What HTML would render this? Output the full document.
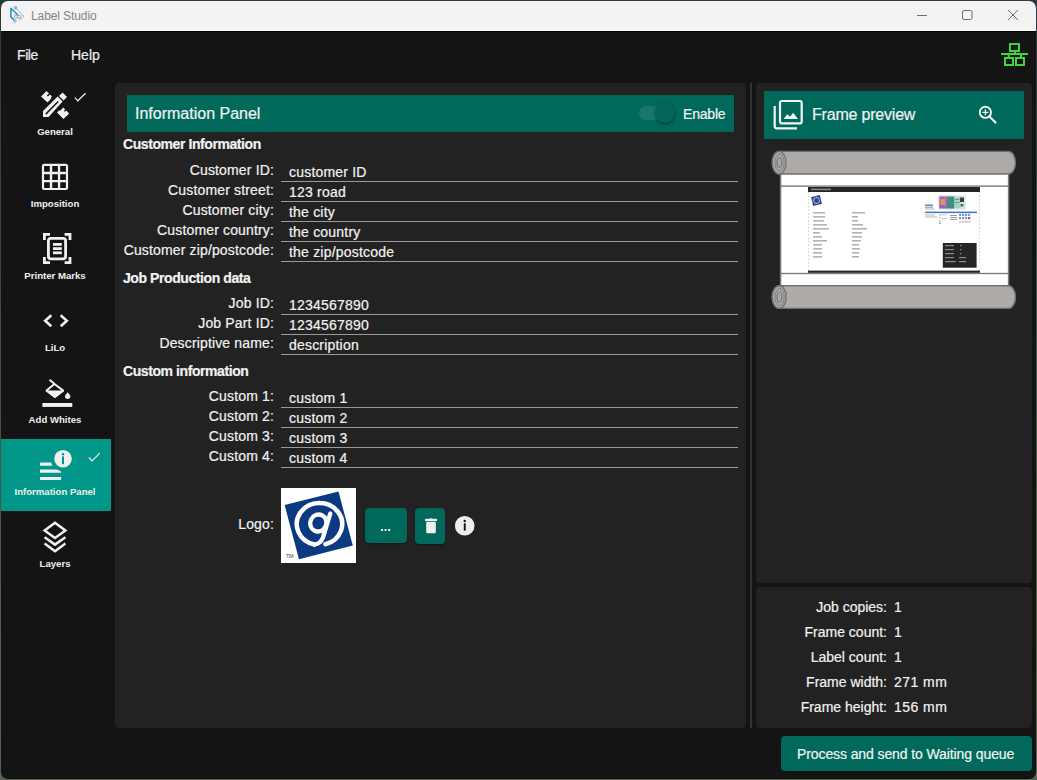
<!DOCTYPE html>
<html><head><meta charset="utf-8">
<style>
*{margin:0;padding:0;box-sizing:border-box}
html,body{width:1037px;height:780px;overflow:hidden;background:linear-gradient(#2c3a3e,#4a5448 60%,#5a6452);font-family:"Liberation Sans",sans-serif}
.a{position:absolute}
#win{position:absolute;left:1px;top:1px;width:1035px;height:778px;background:#141414;border-radius:7px;overflow:hidden;border-bottom:1px solid #0e0e0e}
#title{position:absolute;left:0;top:0;width:1035px;height:30px;background:#f3f3f3;border-bottom:1px solid #fff}
.t{position:absolute;white-space:nowrap;color:#f2f2f2;font-size:14px;line-height:16px;-webkit-text-stroke:0.2px currentColor}
.lbl{text-align:right;width:200px;left:74px;letter-spacing:0.15px}
.val{left:289px;letter-spacing:0.2px}
.ul{position:absolute;left:281px;width:457px;height:1px;background:#9a9a9a}
.hdr{font-weight:bold;letter-spacing:-0.42px;left:123px}
.side{position:absolute;font-weight:bold;font-size:9.6px;line-height:12px;color:#f0f0f0;white-space:nowrap;text-align:center;width:110px;left:0}
.panel{position:absolute;background:#222222;border-radius:4px}
.btn{position:absolute;background:#00695c;border-radius:4px}
</style></head><body>
<div id="win">
  <div id="title">
    <div class="t" style="left:30px;top:8px;font-size:12px;line-height:14px;color:#858585;-webkit-text-stroke:0;letter-spacing:-0.1px">Label Studio</div>
  </div>
  <div class="a" style="left:0;top:30px;width:1035px;height:1px;background:#000"></div>
</div>

<!-- menu -->
<div class="t" style="left:17px;top:47px;font-size:14px;color:#eee;letter-spacing:-0.4px">File</div>
<div class="t" style="left:71px;top:47px;font-size:14px;color:#eee">Help</div>

<!-- sidebar selected -->
<div class="a" style="left:1px;top:439px;width:110px;height:72px;background:#009688"></div>

<!-- sidebar labels -->
<div class="side" style="top:126px">General</div>
<div class="side" style="top:198px">Imposition</div>
<div class="side" style="top:270px">Printer Marks</div>
<div class="side" style="top:342px">LiLo</div>
<div class="side" style="top:414px">Add Whites</div>
<div class="side" style="top:486px">Information Panel</div>
<div class="side" style="top:558px">Layers</div>

<!-- panels -->
<div class="panel" style="left:115px;top:83px;width:631px;height:645px"></div>
<div class="a" style="left:750px;top:83px;width:2px;height:645px;background:#333"></div>
<div class="panel" style="left:756px;top:83px;width:276px;height:500px"></div>
<div class="panel" style="left:756px;top:587px;width:276px;height:141px"></div>

<!-- info header -->
<div class="a" style="left:127px;top:95px;width:607px;height:37px;background:#00695c"></div>
<div class="t" style="left:135px;top:105px;font-size:16px;line-height:18px">Information Panel</div>
<div class="a" style="left:639px;top:106px;width:29px;height:14px;border-radius:7px;background:#1e7a6e;opacity:.8"></div>
<div class="a" style="left:655px;top:103px;width:20px;height:20px;border-radius:10px;background:#02665a;box-shadow:0 1px 3px rgba(0,0,0,.45)"></div>
<div class="t" style="left:683px;top:106px;letter-spacing:-0.2px">Enable</div>

<!-- form -->
<div class="t hdr" style="top:136px">Customer Information</div>
<div class="t lbl" style="top:162px">Customer ID:</div>
<div class="t lbl" style="top:182px">Customer street:</div>
<div class="t lbl" style="top:202px">Customer city:</div>
<div class="t lbl" style="top:222px">Customer country:</div>
<div class="t lbl" style="top:242px">Customer zip/postcode:</div>
<div class="t val" style="top:164px">customer ID</div>
<div class="t val" style="top:184px">123 road</div>
<div class="t val" style="top:204px">the city</div>
<div class="t val" style="top:224px">the country</div>
<div class="t val" style="top:244px">the zip/postcode</div>
<div class="ul" style="top:181px"></div>
<div class="ul" style="top:201px"></div>
<div class="ul" style="top:221px"></div>
<div class="ul" style="top:241px"></div>
<div class="ul" style="top:261px"></div>

<div class="t hdr" style="top:270px">Job Production data</div>
<div class="t lbl" style="top:295px">Job ID:</div>
<div class="t lbl" style="top:315px">Job Part ID:</div>
<div class="t lbl" style="top:335px">Descriptive name:</div>
<div class="t val" style="top:297px">1234567890</div>
<div class="t val" style="top:317px">1234567890</div>
<div class="t val" style="top:337px">description</div>
<div class="ul" style="top:314px"></div>
<div class="ul" style="top:334px"></div>
<div class="ul" style="top:354px"></div>

<div class="t hdr" style="top:363px">Custom information</div>
<div class="t lbl" style="top:388px">Custom 1:</div>
<div class="t lbl" style="top:408px">Custom 2:</div>
<div class="t lbl" style="top:428px">Custom 3:</div>
<div class="t lbl" style="top:448px">Custom 4:</div>
<div class="t val" style="top:390px">custom 1</div>
<div class="t val" style="top:410px">custom 2</div>
<div class="t val" style="top:430px">custom 3</div>
<div class="t val" style="top:450px">custom 4</div>
<div class="ul" style="top:407px"></div>
<div class="ul" style="top:427px"></div>
<div class="ul" style="top:447px"></div>
<div class="ul" style="top:467px"></div>

<div class="t lbl" style="top:516px">Logo:</div>
<div class="a" style="left:281px;top:488px;width:75px;height:75px;background:#fff"></div>
<div class="btn" style="left:365px;top:508px;width:42px;height:35px;box-shadow:0 1px 2px rgba(0,0,0,.4)"></div>
<div class="btn" style="left:415px;top:508px;width:30px;height:36px;box-shadow:0 1px 2px rgba(0,0,0,.4)"></div>

<!-- frame preview header -->
<div class="a" style="left:764px;top:91px;width:260px;height:48px;background:#00695c"></div>
<div class="t" style="left:812px;top:106px;font-size:16px;line-height:18px;letter-spacing:-0.2px">Frame preview</div>

<!-- stats -->
<div class="t" style="left:687px;width:200px;text-align:right;top:599px">Job copies:</div>
<div class="t" style="left:687px;width:200px;text-align:right;top:624px">Frame count:</div>
<div class="t" style="left:687px;width:200px;text-align:right;top:649px">Label count:</div>
<div class="t" style="left:687px;width:200px;text-align:right;top:674px">Frame width:</div>
<div class="t" style="left:687px;width:200px;text-align:right;top:699px">Frame height:</div>
<div class="t" style="left:894px;top:599px">1</div>
<div class="t" style="left:894px;top:624px">1</div>
<div class="t" style="left:894px;top:649px">1</div>
<div class="t" style="left:894px;top:674px;letter-spacing:0.45px">271 mm</div>
<div class="t" style="left:894px;top:699px;letter-spacing:0.45px">156 mm</div>

<!-- process button -->
<div class="btn" style="left:781px;top:736px;width:251px;height:35px"></div>
<div class="t" style="left:797px;top:746px;letter-spacing:-0.1px">Process and send to Waiting queue</div>



<!-- frame preview roll -->
<svg class="a" style="left:0;top:0" width="1037" height="780" viewBox="0 0 1037 780">
 <defs>
  <g id="roller">
   <path d="M779.2 0.4 H1008.5 A7 11.3 0 0 1 1008.5 23 H779.2 A7 11.3 0 0 1 779.2 0.4 Z" fill="#adaaa8" stroke="#6f6f6f" stroke-width="1.4"/>
   <ellipse cx="779.2" cy="11.7" rx="7" ry="11.3" fill="#a9a6a4" stroke="#6f6f6f" stroke-width="1.2"/>
   <ellipse cx="779.6" cy="11.7" rx="4.6" ry="8.6" fill="none" stroke="#7a7a7a" stroke-width="0.9"/>
   <ellipse cx="779.4" cy="11.7" rx="2.4" ry="5" fill="none" stroke="#6a6a6a" stroke-width="0.9"/>
  </g>
 </defs>
 <rect x="780.6" y="173" width="228" height="114" fill="#fff" stroke="#7a7a7a" stroke-width="1.5"/>
 <rect x="780.6" y="185.4" width="228" height="1.4" fill="#7d7d7d"/>
 <rect x="780.6" y="272.8" width="228" height="1.4" fill="#7d7d7d"/>
 <use href="#roller" transform="translate(0,151)"/>
 <use href="#roller" transform="translate(0,285.4)"/>
 <!-- label thumb -->
 <rect x="808" y="187" width="172" height="5" fill="#252525"/>
 <rect x="811" y="188.6" width="20" height="1.6" fill="#8a8a8a"/>
 <rect x="808" y="270.6" width="172" height="2.2" fill="#252525"/>
 <path d="M808.6 192 V270 M979.4 192 V270" stroke="#9bd49b" stroke-width="0.8" stroke-dasharray="1.5 2"/>
 <g transform="rotate(-14 816.5 200.5)"><rect x="812" y="196" width="9" height="9" fill="#2d4590"/><circle cx="816.5" cy="200.5" r="3" fill="none" stroke="#c0c8e0" stroke-width="0.9"/></g>
 <rect x="813" y="212" width="12" height="1.6" fill="#b4b4b4"/><rect x="852" y="212" width="13" height="1.6" fill="#b4b4b4"/><rect x="813" y="216" width="12" height="1.6" fill="#b4b4b4"/><rect x="852" y="216" width="6" height="1.6" fill="#b4b4b4"/><rect x="813" y="220" width="11" height="1.6" fill="#b4b4b4"/><rect x="852" y="220" width="6" height="1.6" fill="#b4b4b4"/><rect x="813" y="224" width="14" height="1.6" fill="#b4b4b4"/><rect x="852" y="224" width="11" height="1.6" fill="#b4b4b4"/><rect x="813" y="228" width="16" height="1.6" fill="#b4b4b4"/><rect x="852" y="228" width="15" height="1.6" fill="#b4b4b4"/><rect x="813" y="232" width="7" height="1.6" fill="#b4b4b4"/><rect x="852" y="232" width="10" height="1.6" fill="#b4b4b4"/><rect x="813" y="236" width="9" height="1.6" fill="#b4b4b4"/><rect x="852" y="236" width="10" height="1.6" fill="#b4b4b4"/><rect x="813" y="240" width="14" height="1.6" fill="#b4b4b4"/><rect x="852" y="240" width="9" height="1.6" fill="#b4b4b4"/><rect x="813" y="244" width="9" height="1.6" fill="#b4b4b4"/><rect x="852" y="244" width="7" height="1.6" fill="#b4b4b4"/><rect x="813" y="248" width="9" height="1.6" fill="#b4b4b4"/><rect x="852" y="248" width="8" height="1.6" fill="#b4b4b4"/><rect x="813" y="252" width="9" height="1.6" fill="#b4b4b4"/><rect x="852" y="252" width="7" height="1.6" fill="#b4b4b4"/><rect x="813" y="256" width="9" height="1.6" fill="#b4b4b4"/><rect x="852" y="256" width="7" height="1.6" fill="#b4b4b4"/>
 <rect x="938.5" y="195.5" width="27" height="14" fill="none" stroke="#d8d8d8" stroke-width="0.5"/>
 <rect x="939" y="196" width="26" height="13" fill="#cfe6df"/>
 <rect x="939.3" y="196.5" width="8" height="12" fill="#9c62c8"/>
 <rect x="940.5" y="199" width="5" height="6" fill="#d89a50"/>
 <rect x="944.5" y="197" width="2.5" height="4" fill="#e060a8"/>
 <rect x="947" y="196.5" width="7.5" height="12" fill="#3f8f7c"/>
 <rect x="954.5" y="197" width="6" height="11" fill="#a9d2c8"/>
 <rect x="955" y="199" width="4.5" height="1" fill="#708f88"/>
 <rect x="955" y="202" width="4.5" height="1" fill="#708f88"/>
 <rect x="960" y="197.5" width="4" height="4.5" fill="#3a3f3f"/>
 <rect x="960.5" y="204" width="3" height="2.5" fill="#4a7a70"/>
 <rect x="925" y="204.5" width="8" height="1.6" fill="#4a90d0"/>
 <rect x="925" y="206.8" width="8" height="0.9" fill="#8a8a8a"/>
 <rect x="925" y="208.5" width="9" height="0.9" fill="#aaaaaa"/>
 <rect x="925" y="211.6" width="52" height="1.5" fill="#3a78c8"/>
 <rect x="925" y="214.5" width="10" height="0.9" fill="#b0b0b0"/>
 <rect x="925" y="216.5" width="12" height="0.9" fill="#b0b0b0"/>
 <rect x="939" y="214" width="1.6" height="1.6" fill="#80d8e0"/>
 <rect x="939" y="217" width="1.6" height="1.6" fill="#e8d860"/>
 <rect x="939" y="220" width="1.6" height="1.6" fill="#d8c0e8"/>
 <rect x="939" y="222.5" width="1.6" height="1.2" fill="#8060b0"/>
 <rect x="941.5" y="214.5" width="5" height="0.9" fill="#b8b8b8"/>
 <rect x="941.5" y="218" width="6" height="0.9" fill="#b8b8b8"/>
 <rect x="950" y="215" width="7" height="0.9" fill="#909090"/>
 <rect x="950" y="217" width="7" height="0.9" fill="#909090"/>
 <rect x="950" y="219" width="7" height="0.9" fill="#909090"/>
 <g fill="#7a9ad8"><rect x="959" y="213.8" width="2.2" height="2.2"/><rect x="962" y="213.8" width="2.2" height="2.2"/><rect x="965" y="213.8" width="2.2" height="2.2"/><rect x="968" y="213.8" width="2.2" height="2.2"/><rect x="959" y="217" width="2.2" height="2.2"/><rect x="962" y="217" width="2.2" height="2.2"/><rect x="965" y="217" width="2.2" height="2.2"/></g>
 <rect x="968" y="217" width="2.2" height="2.2" fill="#d04050"/>
 <rect x="959" y="221.5" width="12" height="0.8" fill="#a0a0a0"/>
 <rect x="942.8" y="243" width="33.8" height="24.7" fill="#252525"/>
 <g fill="#8a8a8a"><rect x="945" y="245" width="9" height="1.2"/><rect x="945" y="249" width="9" height="1.2"/><rect x="945" y="253" width="9" height="1.2"/><rect x="945" y="257" width="9" height="1.2"/><rect x="945" y="261" width="11" height="1.2"/>
 <rect x="960" y="245" width="1.5" height="1.2"/><rect x="960" y="249" width="1.5" height="1.2"/><rect x="960" y="253" width="1.5" height="1.2"/><rect x="959" y="257" width="7" height="1.2"/><rect x="959" y="261" width="7" height="1.2"/></g>
</svg>

<!-- logo -->
<svg class="a" style="left:281px;top:488px" width="75" height="75" viewBox="281 488 75 75">
 <rect x="281" y="488" width="75" height="75" fill="#fff"/>
 <path d="M284.6 505 L338.5 491.6 L352.8 545.5 L299 559.3 Z" fill="#0b3a80"/>
 <path d="M314.4 544.5 A22.7 21 0 1 1 325.4 544.3" fill="none" stroke="#fff" stroke-width="4.5" stroke-linecap="round"/>
 <ellipse cx="318.3" cy="523" rx="8" ry="8.6" transform="rotate(25 318.3 523)" fill="none" stroke="#fff" stroke-width="4.3"/>
 <path d="M330.3 513.5 L323 537.5 Q320.5 544 314.4 544.5" fill="none" stroke="#fff" stroke-width="4.3" stroke-linecap="round"/>
 <text x="286" y="557.5" font-family="Liberation Sans" font-size="5.5" fill="#444" letter-spacing="-0.3">TM</text>
</svg>

<!-- icon overlay -->
<svg class="a" style="left:0;top:0" width="1037" height="780" viewBox="0 0 1037 780">
 <!-- app logo -->
 <g fill="none" stroke-linejoin="round">
  <path d="M17.8 15 L11 8.3 L10.8 16.8 L14 19.8" stroke="#2a93d5" stroke-width="1.6"/>
  <path d="M15.6 7.6 L23.6 16.4 L19 20.4" stroke="#5d93b3" stroke-width="1" stroke-dasharray="1.3 0.7"/>
  <circle cx="15.4" cy="7.6" r="1.1" stroke="#5a8fb0" stroke-width="0.9"/>
  <circle cx="14.9" cy="21" r="1.3" stroke="#6a9ab8" stroke-width="0.9"/>
  <circle cx="16" cy="16.5" r="1.5" stroke="#7ea3b8" stroke-width="0.9"/>
  <circle cx="19" cy="16.8" r="1.5" stroke="#7ea3b8" stroke-width="0.9"/>
 </g>
 <!-- window controls -->
 <g stroke="#6e6e6e" stroke-width="1" fill="none">
  <path d="M917 15.5 H927"/>
  <rect x="962.5" y="10.5" width="9.5" height="9" rx="1.5"/>
  <path d="M1008 10 L1018 20 M1018 10 L1008 20"/>
 </g>
 <!-- network icon -->
 <g fill="none" stroke="#3ad63a" stroke-width="2">
  <rect x="1010" y="44" width="9" height="7"/>
  <path d="M1015 51 V54 M1001 54 H1028 M1008.7 54 V58 M1021 54 V58"/>
  <rect x="1005" y="58" width="8" height="7"/>
  <rect x="1016" y="58" width="8" height="7"/>
 </g>
 <!-- sidebar icons -->
 <g fill="#f0f0f0">
  <!-- general -->
  <path d="M41 96.5 L46.5 90.9 L49 93.4 L46.8 95.6 L47.8 96.6 L50 94.4 L52 96.4 L50.8 97.6 L51.4 98.2 L47.6 102.4 Z"/>
  <path d="M59 95.9 L62.6 92.4 L67 96.9 L63.6 100.5 Z"/>
  <path d="M57 112.4 L59.1 110.3 L59.8 111 L60.5 110.3 L63.4 107.6 L65.2 109.4 L63.9 110.8 L64.8 111.7 L66.1 110.4 L69.2 113.4 L63.5 119.1 Z"/>
  <path fill-rule="evenodd" d="M43 111 L57.6 96.6 L62.6 101.6 L48.6 117 L43 117 Z M45.3 113.6 L46.3 114.7 L58.7 102.1 L57.7 101 Z"/>
 </g>
 <path d="M74.9 97.6 L77.8 100.8 L85.6 93.2" fill="none" stroke="#eee" stroke-width="1.2"/>
 <!-- imposition grid -->
 <path fill="#f0f0f0" fill-rule="evenodd" d="M44.2 163.7 H65.8 A2.3 2.3 0 0 1 68.1 166 V187.8 A2.3 2.3 0 0 1 65.8 190.1 H44.2 A2.3 2.3 0 0 1 41.9 187.8 V166 A2.3 2.3 0 0 1 44.2 163.7 Z M44.1 166.1 h5.7 v5.7 h-5.7 Z M52.2 166.1 h5.7 v5.7 h-5.7 Z M60.2 166.1 h5.7 v5.7 h-5.7 Z M44.1 174.2 h5.7 v5.7 h-5.7 Z M52.2 174.2 h5.7 v5.7 h-5.7 Z M60.2 174.2 h5.7 v5.7 h-5.7 Z M44.1 182.2 h5.7 v5.7 h-5.7 Z M52.2 182.2 h5.7 v5.7 h-5.7 Z M60.2 182.2 h5.7 v5.7 h-5.7 Z"/>
 <!-- printer marks -->
 <g fill="none" stroke="#f0f0f0" stroke-width="2.8">
  <path d="M44.4 240 V234.4 H50"/>
  <path d="M64.6 234.4 H70 V240"/>
  <path d="M44.4 257 V262.6 H50"/>
  <path d="M64.6 262.6 H70 V257"/>
  <rect x="48.4" y="238.4" width="17.2" height="20.4" rx="2.5"/>
 </g>
 <g fill="#f0f0f0">
  <rect x="53" y="243" width="8.8" height="2.8"/>
  <rect x="53" y="247.2" width="8.8" height="2.8"/>
  <rect x="53" y="251.4" width="8.8" height="2.8"/>
 </g>
 <!-- lilo -->
 <g fill="none" stroke="#f0f0f0" stroke-width="2.6" stroke-linecap="square">
  <path d="M50.3 316.2 L45.2 320.8 L50.3 325.4"/>
  <path d="M61.7 316.2 L66.8 320.8 L61.7 325.4"/>
 </g>
 <!-- add whites -->
 <g fill="none" stroke="#f0f0f0" stroke-width="2" stroke-linejoin="round">
  <path d="M49.5 379.7 L54.4 383.7"/>
  <path d="M54.4 384 L63.2 390.6 L54.9 397 L46.6 390.6 Z"/>
 </g>
 <path fill="#f0f0f0" d="M45.5 390.5 H64.2 L54.9 398 Z"/>
 <path fill="#f0f0f0" d="M67.7 392.3 C66.8 393.6 65 394.9 65 396.3 A2.7 2.7 0 0 0 70.4 396.3 C70.4 394.9 68.6 393.6 67.7 392.3 Z"/>
 <rect x="42.4" y="403" width="29.9" height="3.9" fill="#f0f0f0"/>
 <!-- information panel icon -->
 <g fill="#f0f0f0">
  <circle cx="63" cy="458.8" r="8.8"/>
  <path d="M40 462.4 H51 L52.5 465.8 H40 Z"/>
  <path d="M40 469.6 H57 L61.1 471.5 V472.8 H40 Z"/>
  <rect x="40" y="477" width="21.1" height="3"/>
 </g>
 <g fill="#009688">
  <circle cx="63" cy="454.3" r="1.2"/>
  <rect x="62" y="456.4" width="2" height="7.8"/>
 </g>
 <path d="M89 457.5 L92 460.9 L99.8 453.1" fill="none" stroke="#eee" stroke-width="1.2"/>
 <!-- layers -->
 <g fill="none" stroke="#f0f0f0" stroke-width="2.5">
  <path d="M55 522.8 L65.4 530.4 L55 537.9 L44.6 530.4 Z"/>
  <path d="M44.6 537.3 L55 544.6 L65.4 537.3"/>
  <path d="M44.6 543.6 L55 551.3 L65.4 543.6"/>
 </g>
 <!-- frame preview icon -->
 <g fill="none" stroke="#f4f4f4" stroke-width="2.2">
  <rect x="780" y="101" width="21.7" height="22.4" rx="2"/>
  <path d="M774.7 106 V126.5 A1.8 1.8 0 0 0 776.5 128.3 H797"/>
 </g>
 <path fill="#f4f4f4" d="M783.5 119 L787.3 114.2 L790 116.8 L793.2 112.8 L798 119 Z"/>
 <!-- zoom icon -->
 <g fill="none" stroke="#f4f4f4" stroke-width="1.9">
  <circle cx="985.4" cy="112.3" r="5.6"/>
  <path d="M989.5 116.5 L995.5 122.5" stroke-width="2.2" stroke-linecap="round"/>
  <path d="M985.4 109.3 V115.3 M982.4 112.3 H988.4" stroke-width="1.3"/>
 </g>
 <!-- logo buttons -->
 <g fill="#f0f0f0">
  <rect x="381" y="529" width="2" height="2"/>
  <rect x="384.6" y="529" width="2" height="2"/>
  <rect x="388.2" y="529" width="2" height="2"/>
  <path d="M425 518.8 H437 V521 H425 Z"/>
  <path d="M429 518.8 Q431 517 433 518.8 Z"/>
  <path d="M426.2 521.8 H435.8 V532 A1.3 1.3 0 0 1 434.5 533.3 H427.5 A1.3 1.3 0 0 1 426.2 532 Z"/>
  <circle cx="464.7" cy="525.7" r="9.8" fill="#eeeeee"/>
 </g>
 <g fill="#111">
  <circle cx="464.7" cy="521" r="1.2"/>
  <rect x="463.8" y="523.3" width="1.9" height="7.3"/>
 </g>
</svg>

</body></html>
